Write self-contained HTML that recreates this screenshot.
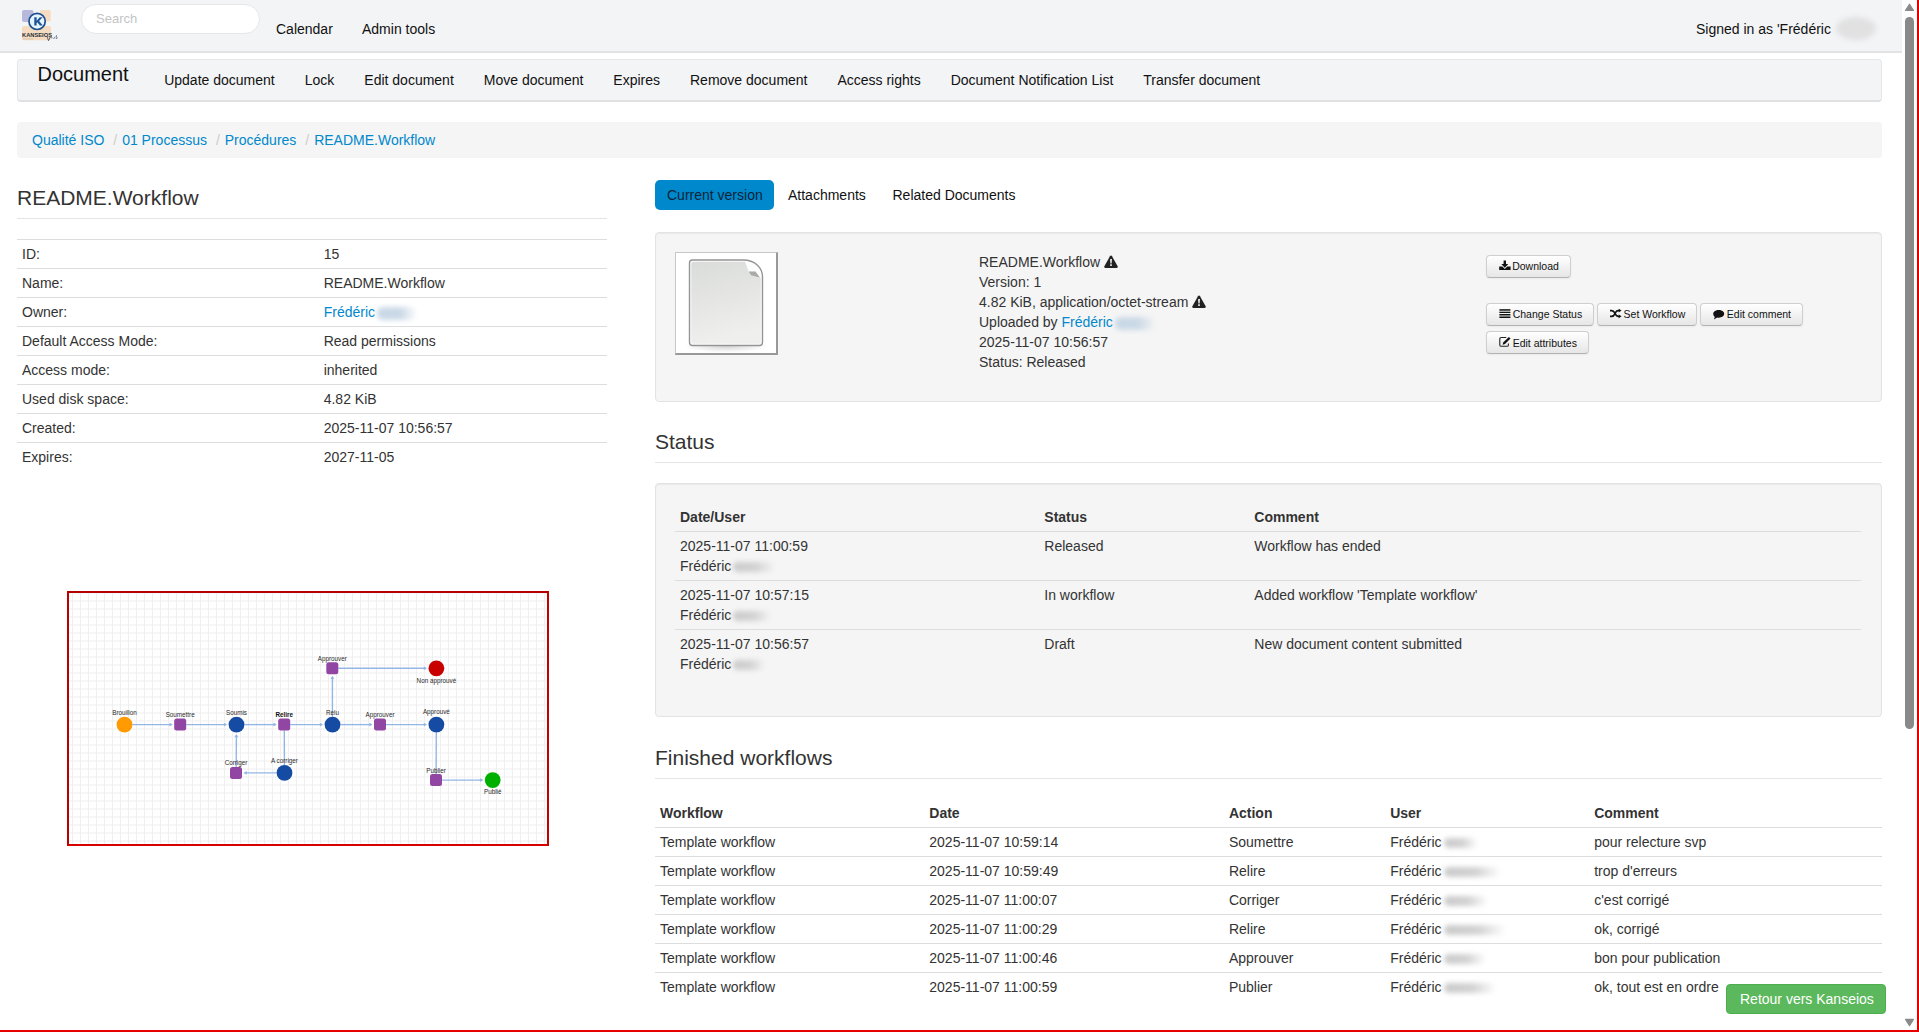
<!DOCTYPE html>
<html>
<head>
<meta charset="utf-8">
<style>
*{box-sizing:border-box;}
html,body{margin:0;padding:0;}
body{width:1919px;height:1032px;overflow:hidden;position:relative;background:#fff;font-family:"Liberation Sans",sans-serif;font-size:14px;line-height:20px;color:#333;}
.abs{position:absolute;}
a{color:#0088cc;text-decoration:none;}
/* top navbar */
#topbar{position:absolute;left:0;top:0;width:1902px;height:53px;background:#f3f4f6;border-bottom:2px solid #e2e3e5;}
#search{position:absolute;left:81px;top:4px;width:179px;height:30px;border:1px solid #e6e7e9;border-radius:15px;background:#fff;}
#search span{position:absolute;left:14px;top:5px;color:#c4c4c4;font-size:13px;line-height:18px;}
.tlink{position:absolute;top:19px;color:#111;line-height:20px;}
/* subnav */
#subnav{position:absolute;left:17px;top:59px;width:1865px;height:43px;background:#f3f4f6;border:1px solid #e6e7e9;border-bottom:2px solid #dfe0e2;border-radius:4px;}
#brand{position:absolute;left:19.5px;top:0px;font-size:20px;line-height:20px;color:#111;}
.nav{position:absolute;top:14px;left:0;white-space:nowrap;}
.ni{position:absolute;top:10px;color:#111;line-height:20px;}
/* breadcrumb */
#crumb{position:absolute;left:17px;top:122px;width:1865px;height:36px;background:#f5f5f5;border-radius:4px;padding:8px 15px;white-space:nowrap;}
#crumb .d{color:#ccc;padding:0 5px;}
/* headings */
.h{position:absolute;font-size:21px;line-height:24px;color:#333;}
.hline{position:absolute;height:1px;background:#e4e4e4;}
/* tables */
table{border-collapse:collapse;border-spacing:0;}
td,th{padding:4px 5px;line-height:20px;text-align:left;vertical-align:top;}
.info{position:absolute;left:17px;top:239px;width:590px;}
.info td{border-top:1px solid #ddd;}
.info tr:last-child td{border-bottom:0;}
.well{position:absolute;background:#f5f5f5;border:1px solid #e3e3e3;border-radius:4px;box-shadow:inset 0 1px 1px rgba(0,0,0,.05);}
.btn{position:absolute;height:23px;border:1px solid #cfcfcf;border-bottom-color:#b3b3b3;border-radius:4px;background:linear-gradient(#ffffff,#e6e6e6);box-shadow:inset 0 1px 0 rgba(255,255,255,.2),0 1px 2px rgba(0,0,0,.05);font-size:10.5px;line-height:21px;color:#222;white-space:nowrap;}
.btn i{position:absolute;top:0;}
.btn span{position:absolute;}
.st th{font-weight:bold;}
.st td{border-top:1px solid #ddd;}
.warn{display:inline-block;width:14px;height:13px;vertical-align:-1px;}
.bt{position:absolute;font-size:10.5px;line-height:12px;color:#111;white-space:nowrap;}
.bl{display:inline-block;height:10px;margin-left:2px;vertical-align:-1px;background:linear-gradient(90deg,#cacaca,#d2d2d2 55%,rgba(220,220,220,0));border-radius:6px;filter:blur(2.6px);}
.lb{height:13px;vertical-align:-3px;background:linear-gradient(90deg,#c8d8e5,#cbd9e6 60%,rgba(205,218,230,0));}
.blur{display:inline-block;filter:blur(2.5px);color:#bbb;}
</style>
</head>
<body>
<!-- TOP NAVBAR -->
<div id="topbar">
<svg class="abs" style="left:0;top:0" width="70" height="50" viewBox="0 0 70 50">
 <rect x="22" y="10" width="11.5" height="12" rx="2" fill="#b8b8dc"/>
 <rect x="39.7" y="10" width="11" height="11.5" rx="2" fill="#f6dac2"/>
 <rect x="22" y="26" width="29" height="14.2" rx="2" fill="#f5dbbf"/>
 <circle cx="37.1" cy="21.4" r="8.1" fill="#e6f4ff" stroke="#1c4f8d" stroke-width="1.7"/>
 <path d="M34.3 17.2h2.3v3.5l3.2-3.5h2.8l-3.5 3.8l3.7 4.6h-2.9l-2.6-3.4l-0.7 0.8v2.6h-2.3z" fill="#1b5396"/>
 <text x="22" y="36.5" font-size="5.2" font-weight="bold" fill="#27303c" textLength="30" lengthAdjust="spacingAndGlyphs">KANSEIOS</text>
 <rect x="22.5" y="38.6" width="11" height="0.7" fill="#c9b9a8"/>
 <path d="M47 36.2l1.5 4.5l1.6-3.6M50.6 37.5c1 -0.6 1.8 0 1.2 0.9M53.5 38.5c0.5 -1.2 1.8-1.3 1.4 0M57 35.5c-1.2 0.2-1.4 1.2-0.3 1.6c1 0.4 0.7 1.5-0.5 1.5" fill="none" stroke="#3b4a60" stroke-width="0.8"/>
</svg>

  <div id="search"><span>Search</span></div>
  <div class="tlink" style="left:276px">Calendar</div>
  <div class="tlink" style="left:362px">Admin tools</div>
  <div class="tlink" style="left:1696px">Signed in as 'Frédéric</div>
  <div class="abs" style="left:1836px;top:17px;width:40px;height:23px;border-radius:50%;background:#e1e1e2;filter:blur(2.5px)"></div>
</div>

<!-- SUBNAV -->
<div id="subnav">
  <div id="brand" style="top:4px">Document</div>
  <span class="ni" style="left:146.2px">Update document</span>
  <span class="ni" style="left:286.7px">Lock</span>
  <span class="ni" style="left:346.3px">Edit document</span>
  <span class="ni" style="left:465.8px">Move document</span>
  <span class="ni" style="left:595.3px">Expires</span>
  <span class="ni" style="left:672.0px">Remove document</span>
  <span class="ni" style="left:819.4px">Access rights</span>
  <span class="ni" style="left:932.7px">Document Notification List</span>
  <span class="ni" style="left:1125.2px">Transfer document</span>
</div>

<!-- BREADCRUMB -->
<div id="crumb"><a>Qualité ISO</a> <span class="d">/</span><a>01 Processus</a> <span class="d">/</span><a>Procédures</a> <span class="d">/</span><a>README.Workflow</a></div>

<!-- LEFT COLUMN -->
<div class="h" style="left:17px;top:185.7px">README.Workflow</div>
<div class="hline" style="left:17px;top:218px;width:590px"></div>
<table class="info">
<colgroup><col style="width:301.7px"><col></colgroup>
<tr><td>ID:</td><td>15</td></tr>
<tr><td>Name:</td><td>README.Workflow</td></tr>
<tr><td>Owner:</td><td><a>Frédéric</a><span class="bl lb" style="width:40px"></span></td></tr>
<tr><td>Default Access Mode:</td><td>Read permissions</td></tr>
<tr><td>Access mode:</td><td>inherited</td></tr>
<tr><td>Used disk space:</td><td>4.82 KiB</td></tr>
<tr><td>Created:</td><td>2025-11-07 10:56:57</td></tr>
<tr><td>Expires:</td><td>2027-11-05</td></tr>
</table>

<div id="diagram" class="abs" style="left:67px;top:591px;width:482px;height:255px;border:2px solid #c40000;border-top-color:#b40000;border-left-color:#ba0000;border-bottom-color:#d60000;"></div>
<svg class="abs" style="left:69px;top:593px" width="478" height="251" viewBox="69 593 478 251">
<defs><pattern id="grid" x="72" y="600.5" width="8" height="8" patternUnits="userSpaceOnUse"><path d="M0.5 0V8M0 0.5H8" stroke="#efefef" stroke-width="1" fill="none"/></pattern></defs>
<rect x="69" y="593" width="478" height="251" fill="#fff"/>
<rect x="69" y="593" width="478" height="251" fill="url(#grid)"/>
<line x1="132.4" y1="724.6" x2="171.7" y2="724.6" stroke="#94b6e4" stroke-width="1.4"/>
<path d="M172.7 724.6L169.5 726.5L169.5 722.7Z" fill="#94b6e4"/>
<line x1="186.2" y1="724.6" x2="226.1" y2="724.6" stroke="#94b6e4" stroke-width="1.4"/>
<path d="M227.1 724.6L223.9 726.5L223.9 722.7Z" fill="#94b6e4"/>
<line x1="244.4" y1="724.6" x2="275.7" y2="724.6" stroke="#94b6e4" stroke-width="1.4"/>
<path d="M276.7 724.6L273.5 726.5L273.5 722.7Z" fill="#94b6e4"/>
<line x1="290.2" y1="724.6" x2="322.1" y2="724.6" stroke="#94b6e4" stroke-width="1.4"/>
<path d="M323.1 724.6L319.9 726.5L319.9 722.7Z" fill="#94b6e4"/>
<line x1="340.4" y1="724.6" x2="371.5" y2="724.6" stroke="#94b6e4" stroke-width="1.4"/>
<path d="M372.5 724.6L369.3 726.5L369.3 722.7Z" fill="#94b6e4"/>
<line x1="386.0" y1="724.6" x2="426.0" y2="724.6" stroke="#94b6e4" stroke-width="1.4"/>
<path d="M427.0 724.6L423.8 726.5L423.8 722.7Z" fill="#94b6e4"/>
<line x1="332.4" y1="716.7" x2="332.4" y2="676.8" stroke="#94b6e4" stroke-width="1.4"/>
<path d="M332.4 675.8L334.3 679.0L330.5 679.0Z" fill="#94b6e4"/>
<line x1="338.3" y1="668.3" x2="426.0" y2="668.3" stroke="#94b6e4" stroke-width="1.4"/>
<path d="M427.0 668.3L423.8 670.2L423.8 666.4Z" fill="#94b6e4"/>
<line x1="284.3" y1="730.6" x2="284.4" y2="765.0" stroke="#94b6e4" stroke-width="1.4"/>
<line x1="276.6" y1="772.9" x2="244.5" y2="772.9" stroke="#94b6e4" stroke-width="1.4"/>
<path d="M243.5 772.9L246.7 771.0L246.7 774.8Z" fill="#94b6e4"/>
<line x1="236.2" y1="766.9" x2="236.4" y2="735.0" stroke="#94b6e4" stroke-width="1.4"/>
<path d="M236.4 734.0L238.3 737.2L234.5 737.2Z" fill="#94b6e4"/>
<line x1="436.3" y1="732.5" x2="436.1" y2="774.1" stroke="#94b6e4" stroke-width="1.4"/>
<line x1="442.0" y1="780.1" x2="482.3" y2="780.1" stroke="#94b6e4" stroke-width="1.4"/>
<path d="M483.3 780.1L480.1 782.0L480.1 778.2Z" fill="#94b6e4"/>
<circle cx="124.5" cy="724.7" r="7.9" fill="#ff9a00"/>
<text x="124.5" y="714.8" text-anchor="middle" font-size="6.3" fill="#2a2a2a">Brouillon</text>
<circle cx="236.5" cy="724.6" r="7.9" fill="#154ba3"/>
<text x="236.5" y="714.6" text-anchor="middle" font-size="6.3" fill="#2a2a2a">Soumis</text>
<circle cx="332.5" cy="724.6" r="7.9" fill="#154ba3"/>
<text x="332.5" y="714.8" text-anchor="middle" font-size="6.3" fill="#2a2a2a">Relu</text>
<circle cx="436.4" cy="724.6" r="7.9" fill="#154ba3"/>
<text x="436.4" y="714.4" text-anchor="middle" font-size="6.3" fill="#2a2a2a">Approuvé</text>
<circle cx="284.5" cy="772.9" r="7.9" fill="#154ba3"/>
<text x="284.5" y="762.7" text-anchor="middle" font-size="6.3" fill="#2a2a2a">A corriger</text>
<circle cx="436.4" cy="668.3" r="7.9" fill="#c80000"/>
<text x="436.4" y="682.5" text-anchor="middle" font-size="6.3" fill="#2a2a2a">Non approuvé</text>
<circle cx="492.7" cy="780.1" r="7.9" fill="#00b000"/>
<text x="492.7" y="794.4" text-anchor="middle" font-size="6.3" fill="#2a2a2a">Publié</text>
<rect x="174.2" y="718.6" width="12" height="12" rx="2.5" fill="#9146a4"/>
<text x="180.2" y="716.9" text-anchor="middle" font-size="6.3" fill="#2a2a2a">Soumettre</text>
<rect x="278.2" y="718.6" width="12" height="12" rx="2.5" fill="#9146a4"/>
<text x="284.2" y="716.9" text-anchor="middle" font-size="6.3" fill="#111" font-weight="bold">Relire</text>
<rect x="230.0" y="766.9" width="12" height="12" rx="2.5" fill="#9146a4"/>
<text x="236.0" y="764.8" text-anchor="middle" font-size="6.3" fill="#2a2a2a">Corriger</text>
<rect x="326.3" y="662.3" width="12" height="12" rx="2.5" fill="#9146a4"/>
<text x="332.3" y="660.8" text-anchor="middle" font-size="6.3" fill="#2a2a2a">Approuver</text>
<rect x="374.0" y="718.6" width="12" height="12" rx="2.5" fill="#9146a4"/>
<text x="380.0" y="717.0" text-anchor="middle" font-size="6.3" fill="#2a2a2a">Approuver</text>
<rect x="430.0" y="774.1" width="12" height="12" rx="2.5" fill="#9146a4"/>
<text x="436.0" y="772.6" text-anchor="middle" font-size="6.3" fill="#2a2a2a">Publier</text>
</svg>

<!-- RIGHT COLUMN -->
<div class="abs" id="pill" style="left:655px;top:180px;width:119px;height:30px;background:#0088cc;border-radius:5px;"></div>
<div class="abs" style="left:667px;top:188px;line-height:14px;color:#0b2438">Current version</div>
<div class="abs" style="left:788px;top:188px;line-height:14px;color:#111">Attachments</div>
<div class="abs" style="left:892.5px;top:188px;line-height:14px;color:#111">Related Documents</div>

<div class="well" style="left:655px;top:232px;width:1227px;height:170px;"></div>
<div id="thumb" class="abs" style="left:675px;top:252px;width:103px;height:103px;background:#fff;border:1px solid #c8c8c8;border-right:2px solid #999;border-bottom:2px solid #999;"></div>
<svg class="abs" style="left:676px;top:253px" width="100" height="100" viewBox="676 253 100 100">
 <defs><linearGradient id="dg" x1="0" y1="0" x2="0.25" y2="1"><stop offset="0" stop-color="#dadcd9"/><stop offset="1" stop-color="#efefed"/></linearGradient>
 <radialGradient id="sh" cx="0.5" cy="0.5" r="0.5"><stop offset="0" stop-color="#000" stop-opacity="0.16"/><stop offset="1" stop-color="#000" stop-opacity="0"/></radialGradient></defs>
 <ellipse cx="726" cy="346.5" rx="42" ry="6" fill="url(#sh)"/>
 <path d="M692.5 260H743.5C754 260 762.5 267 762.5 277V342.5Q762.5 345.5 759.5 345.5H692.5Q689.5 345.5 689.5 342.5V263Q689.5 260 692.5 260Z" fill="#fdfdfd" stroke="#949494" stroke-width="1.4"/>
 <path d="M693.5 261.8H745L748.8 271.8H755.5L760.8 278.5V342Q760.8 343.8 759 343.8H693.5Q691.3 343.8 691.3 342V263.8Q691.3 261.8 693.5 261.8Z" fill="url(#dg)"/>
 <path d="M748.8 271.6H755.5L759.8 277.6L751 275.3Z" fill="#a9aba9"/>
</svg>
<div class="abs" style="left:979px;top:252px;line-height:20px;color:#333;white-space:nowrap">
README.Workflow <svg class="warn" width="14" height="13" viewBox="0 0 14 13"><path d="M7 0.6c0.45 0 0.8 0.25 1.05 0.65l5.6 9.9c0.45 0.8-0.1 1.75-1 1.75H1.35c-0.9 0-1.45-0.95-1-1.75l5.6-9.9C6.2 0.85 6.55 0.6 7 0.6z" fill="#222"/><path d="M6.1 4h1.8l-0.3 4.6H6.4z" fill="#fff"/><rect x="6.15" y="9.3" width="1.7" height="1.6" fill="#fff"/></svg><br>
Version: 1<br>
4.82 KiB, application/octet-stream <svg class="warn" width="14" height="13" viewBox="0 0 14 13"><path d="M7 0.6c0.45 0 0.8 0.25 1.05 0.65l5.6 9.9c0.45 0.8-0.1 1.75-1 1.75H1.35c-0.9 0-1.45-0.95-1-1.75l5.6-9.9C6.2 0.85 6.55 0.6 7 0.6z" fill="#222"/><path d="M6.1 4h1.8l-0.3 4.6H6.4z" fill="#fff"/><rect x="6.15" y="9.3" width="1.7" height="1.6" fill="#fff"/></svg><br>
Uploaded by <a>Frédéric</a><span class="bl lb" style="width:40px"></span><br>
2025-11-07 10:56:57<br>
Status: Released
</div>

<!-- buttons -->
<div class="btn" style="left:1486px;top:254.5px;width:85px;height:23px"></div>
<svg class="abs" style="left:1499px;top:260px" width="12" height="11" viewBox="0 0 12 11"><path d="M4.6 0.4h2.4v3.6h2.3l-3.5 3.7l-3.5-3.7h2.3z" fill="#111"/><path d="M0.2 6.6h3.2l2.4 2.3l2.4-2.3h3.4v3.4H0.2z" fill="#111"/></svg>
<span class="bt" style="left:1512.2px;top:260.2px">Download</span>

<div class="btn" style="left:1486px;top:303px;width:108px;height:22.5px"></div>
<svg class="abs" style="left:1499px;top:309px" width="12" height="10" viewBox="0 0 12 10"><rect x="0.4" y="0.2" width="11" height="1.5" fill="#111"/><rect x="0.4" y="2.7" width="11" height="1.3" fill="#111"/><rect x="0.4" y="5" width="11" height="1.3" fill="#111"/><rect x="0.4" y="7.5" width="11" height="1.5" fill="#111"/><rect x="0.6" y="6.3" width="10.6" height="1.2" fill="#777"/></svg>
<span class="bt" style="left:1512.7px;top:308.2px">Change Status</span>

<div class="btn" style="left:1597px;top:303px;width:100px;height:22.5px"></div>
<svg class="abs" style="left:1609px;top:308px" width="13" height="11" viewBox="0 0 13 11"><path d="M1 2.6h1.6c1.6 0 2.6 1.2 3.3 2.6l0.6 1.2c0.6 1.2 1.4 1.9 2.8 1.9h0.9" fill="none" stroke="#111" stroke-width="1.7"/><path d="M1 8.4h1.6c1.6 0 2.6-1.2 3.3-2.6l0.6-1.2c0.6-1.2 1.4-1.9 2.8-1.9h0.9" fill="none" stroke="#111" stroke-width="1.7"/><path d="M9.7 0.7l2.9 1.9l-2.9 2z M9.7 6.4l2.9 1.9l-2.9 2z" fill="#111"/></svg>
<span class="bt" style="left:1623.6px;top:308.2px">Set Workflow</span>

<div class="btn" style="left:1700px;top:303px;width:103px;height:22.5px"></div>
<svg class="abs" style="left:1712px;top:309px" width="13" height="12" viewBox="0 0 13 12"><path d="M6.8 0.9c3 0 5.4 1.7 5.4 3.9s-2.4 3.9-5.4 3.9c-0.6 0-1.1-0.1-1.6-0.2l-3.3 2.1l0.9-2.6C1.9 7.3 1.2 6.1 1.2 4.8C1.2 2.6 3.7 0.9 6.8 0.9z" fill="#111"/></svg>
<span class="bt" style="left:1726.8px;top:308.2px">Edit comment</span>

<div class="btn" style="left:1486px;top:331px;width:103px;height:22.5px"></div>
<svg class="abs" style="left:1499px;top:336px" width="12" height="11" viewBox="0 0 12 11"><path d="M7.3 1.5H2.2c-0.9 0-1.4 0.5-1.4 1.4v6c0 0.9 0.5 1.4 1.4 1.4h5.8c0.9 0 1.4-0.5 1.4-1.4V7.6" fill="none" stroke="#222" stroke-width="1.1"/><path d="M9.9 0.9l1.6 1.5l-5.5 5.5l-2.4 0.8l0.8-2.4z" fill="#111"/></svg>
<span class="bt" style="left:1512.7px;top:336.5px">Edit attributes</span>

<div class="h" style="left:655px;top:429.7px">Status</div>
<div class="hline" style="left:655px;top:462px;width:1227px"></div>
<div class="well" style="left:655px;top:483px;width:1227px;height:234px;"></div>
<table class="abs st" style="left:675px;top:503px;width:1186px;">
<colgroup><col style="width:364.3px"><col style="width:210px"><col></colgroup>
<tr><th>Date/User</th><th>Status</th><th>Comment</th></tr>
<tr><td>2025-11-07 11:00:59<br>Frédéric<span class="bl" style="width:42px"></span></td><td>Released</td><td>Workflow has ended</td></tr>
<tr><td>2025-11-07 10:57:15<br>Frédéric<span class="bl" style="width:38px"></span></td><td>In workflow</td><td>Added workflow 'Template workflow'</td></tr>
<tr><td>2025-11-07 10:56:57<br>Frédéric<span class="bl" style="width:32px"></span></td><td>Draft</td><td>New document content submitted</td></tr>
</table>

<div class="h" style="left:655px;top:745.7px">Finished workflows</div>
<div class="hline" style="left:655px;top:778px;width:1227px"></div>
<table class="abs st" style="left:655px;top:799px;width:1227px;">
<colgroup><col style="width:269.3px"><col style="width:299.6px"><col style="width:161.3px"><col style="width:204px"><col></colgroup>
<tr><th>Workflow</th><th>Date</th><th>Action</th><th>User</th><th>Comment</th></tr>
<tr><td>Template workflow</td><td>2025-11-07 10:59:14</td><td>Soumettre</td><td>Frédéric<span class="bl" style="width:34px"></span></td><td>pour relecture svp</td></tr>
<tr><td>Template workflow</td><td>2025-11-07 10:59:49</td><td>Relire</td><td>Frédéric<span class="bl" style="width:57px"></span></td><td>trop d'erreurs</td></tr>
<tr><td>Template workflow</td><td>2025-11-07 11:00:07</td><td>Corriger</td><td>Frédéric<span class="bl" style="width:44px"></span></td><td>c'est corrigé</td></tr>
<tr><td>Template workflow</td><td>2025-11-07 11:00:29</td><td>Relire</td><td>Frédéric<span class="bl" style="width:62px"></span></td><td>ok, corrigé</td></tr>
<tr><td>Template workflow</td><td>2025-11-07 11:00:46</td><td>Approuver</td><td>Frédéric<span class="bl" style="width:42px"></span></td><td>bon pour publication</td></tr>
<tr><td>Template workflow</td><td>2025-11-07 11:00:59</td><td>Publier</td><td>Frédéric<span class="bl" style="width:52px"></span></td><td>ok, tout est en ordre</td></tr>
</table>

<div class="abs" style="left:1726px;top:984px;width:160px;height:30px;background:#5cb85c;border:1px solid #4cae4c;border-radius:4px;color:#fff;line-height:28px;padding-left:13px;white-space:nowrap">Retour vers Kanseios</div>

<!-- scrollbar -->
<div class="abs" style="left:1902px;top:0;width:15px;height:1032px;background:#fff"></div>
<svg class="abs" style="left:1902px;top:0" width="15" height="14"><path d="M3.6 10.4L7.5 4.2L11.4 10.4Z" fill="#898989" stroke="#898989" stroke-width="1.2" stroke-linejoin="round"/></svg>
<div class="abs" style="left:1905px;top:17px;width:9px;height:712px;background:#898989;border-radius:4.5px"></div>
<svg class="abs" style="left:1902px;top:1016px" width="15" height="14"><path d="M3.6 3.4L7.5 9.6L11.4 3.4Z" fill="#898989" stroke="#898989" stroke-width="1.2" stroke-linejoin="round"/></svg>
<!-- red frame -->
<div class="abs" style="left:1917px;top:0;width:2px;height:1032px;background:#e60000"></div>
<div class="abs" style="left:0;top:1030px;width:1919px;height:2px;background:#e60000"></div>

</body>
</html>
